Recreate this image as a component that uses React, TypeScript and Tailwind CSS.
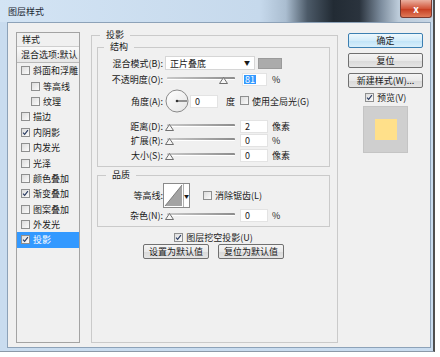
import React from "react";

type Item = { t: string; on?: boolean; ind?: boolean; sel?: boolean };

const items: Item[] = [
  { t: "斜面和浮雕" },
  { t: "等高线", ind: true },
  { t: "纹理", ind: true },
  { t: "描边" },
  { t: "内阴影", on: true },
  { t: "内发光" },
  { t: "光泽" },
  { t: "颜色叠加" },
  { t: "渐变叠加", on: true },
  { t: "图案叠加" },
  { t: "外发光" },
  { t: "投影", on: true, sel: true },
];

function Check({ on }: { on?: boolean }) {
  return (
    <span className="inline-flex h-[9px] w-[9px] shrink-0 items-center justify-center border border-[#8e8f8f] bg-[linear-gradient(135deg,#dcdcdc,#fbfbfb)]">
      {on && (
        <svg viewBox="0 0 9 9" className="h-[7px] w-[7px]">
          <path d="M1.3 4.6 L3.4 6.8 L7.6 1.4" stroke="#2b3d63" strokeWidth="1.5" fill="none" />
        </svg>
      )}
    </span>
  );
}

function Slider({ pos }: { pos: number }) {
  return (
    <div className="relative ml-[2px] h-[12px] w-[70px] shrink-0">
      <div className="absolute left-[2px] right-0 top-[4px] h-[3px] rounded-[1px] border-b border-b-white bg-[linear-gradient(90deg,#c8c8c8,#8c8c8c)]" />
      <svg className="absolute top-[4px]" style={{ left: pos }} width="9" height="7" viewBox="0 0 9 7">
        <path d="M4.5 0.5 L8.5 6.5 L0.5 6.5 Z" fill="#f6f6f6" stroke="#6f6f6f" />
      </svg>
    </div>
  );
}

function Field({ v, w = "w-[28px]", ml = "ml-[5px]" }: { v: string; w?: string; ml?: string }) {
  return (
    <div className={`${ml} ${w} flex h-[13px] shrink-0 items-center border border-[#e3e3e3] bg-white pl-[4px]`}>
      {v}
    </div>
  );
}

function Btn({ children, w, primary }: { children: React.ReactNode; w: string; primary?: boolean }) {
  return (
    <div
      className={`${w} flex h-[15px] items-center justify-center rounded-[2px] border ${
        primary
          ? "border-[#3c7fb1] bg-[linear-gradient(#eef8fd,#d3ecfa_50%,#bfe3f8_51%,#d9effb)]"
          : "border-[#707070] bg-[linear-gradient(#f4f4f4,#e9e9e9_50%,#d9d9d9_51%,#e5e5e5)]"
      }`}
    >
      {children}
    </div>
  );
}

function Label({ children }: { children: React.ReactNode }) {
  return <div className="w-[65px] shrink-0 text-right">{children}</div>;
}

export default function App() {
  return (
    <div className="h-[357px] w-[440px] bg-white font-['Noto_Sans_CJK_SC',sans-serif] text-[9px] leading-none text-[#1a1a1a]">
      <div className="h-[352px] w-[435px] border-r-2 border-b border-r-[#4f4f4f] border-b-[#8c99a8] bg-[#c9dcef]">
        {/* title bar */}
        <div className="relative flex h-[22px] items-center bg-[linear-gradient(90deg,#d3e4f4_0%,#c6d9ec_60%,#aabdd0_66%,#4c5a68_71%,#222b34_77%,#2a333d_83%,#7d8d9e_88%,#bccbd9_92%,#c7d6e5_100%)] pl-[8px]">
          <span className="text-[#1b2733]">图层样式</span>
          <div className="absolute right-[1px] top-0 flex h-[18px] w-[32px] items-center justify-center rounded-b-[3px] border border-t-0 border-[#7a3a30] bg-[linear-gradient(#eab0a0,#d2553a_50%,#c43a1e_51%,#e07a58)] text-[10px] font-bold text-white">
            x
          </div>
        </div>

        {/* client area */}
        <div className="ml-[7px] flex h-[326px] w-[424px] items-start border border-[#8da2b8] bg-[#f0f0f0] pl-[8px]">
          {/* style list */}
          <div className="mt-[9px] h-[311px] w-[64px] shrink-0 border border-[#a3a3a3] bg-[#f0f0f0]">
            <div className="flex h-[14px] items-center border-b border-[#cfcfcf] pl-[5px]">样式</div>
            <div className="flex h-[16px] items-center border-b border-[#b9b9b9] bg-[linear-gradient(#fafafa,#e6e6e6)] pl-[4px]">
              混合选项:默认
            </div>
            {items.map((it) => (
              <div
                key={it.t}
                className={`flex h-[15.4px] items-center gap-[3px] ${it.ind ? "pl-[14px]" : "pl-[4px]"} ${
                  it.sel ? "bg-[#3399ff] text-white" : ""
                }`}
              >
                <Check on={it.on} />
                <span>{it.t}</span>
              </div>
            ))}
          </div>

          {/* main settings */}
          <fieldset className="ml-[11px] mt-[6px] h-[314px] w-[247px] shrink-0 border border-[#cacaca] pl-[5px] pr-[7px]">
            <legend className="ml-[3px] px-[6px] leading-[12px]">投影</legend>

            <fieldset className="w-full border border-[#cacaca] pb-[4px]">
              <legend className="ml-[6px] px-[6px] leading-[12px]">结构</legend>

              <div className="mt-[3px] flex h-[14px] items-center">
                <Label>混合模式(B):</Label>
                <div className="ml-[2px] flex h-[14px] w-[90px] items-center justify-between border border-[#d6d6d6] bg-white pl-[4px] pr-[4px]">
                  <span>正片叠底</span>
                  <span className="text-[6px]">▼</span>
                </div>
                <div className="ml-[3px] h-[11px] w-[24px] border border-[#9a9a9a] bg-[#ababab]" />
              </div>

              <div className="mt-[2px] flex h-[14px] items-center">
                <Label>不透明度(O):</Label>
                <Slider pos={54} />
                <div className="ml-[7px] flex h-[13px] w-[25px] items-center border border-[#e3e3e3] bg-white pl-[1px]">
                  <span className="bg-[#3399ff] px-[1px] text-white">81</span>
                </div>
                <span className="ml-[5px]">%</span>
              </div>

              <div className="mt-[3px] flex h-[24px] items-center">
                <Label>角度(A):</Label>
                <svg className="ml-[2px] shrink-0" width="24" height="24" viewBox="0 0 24 24">
                  <defs>
                    <linearGradient id="dial" x1="0" y1="0" x2="1" y2="1">
                      <stop offset="0" stopColor="#ffffff" />
                      <stop offset="1" stopColor="#e4e4e4" />
                    </linearGradient>
                  </defs>
                  <circle cx="12" cy="12" r="11" fill="url(#dial)" stroke="#8a8a8a" />
                  <line x1="12" y1="12" x2="22" y2="12" stroke="#333" strokeWidth="1" />
                  <circle cx="12" cy="12" r="1.3" fill="#333" />
                </svg>
                <Field v="0" ml="ml-[1px]" />
                <span className="ml-[8px]">度</span>
                <span className="ml-[5px]">
                  <Check />
                </span>
                <span className="ml-[3px]">使用全局光(G)</span>
              </div>

              <div className="mt-[6px] flex h-[14px] items-center">
                <Label>距离(D):</Label>
                <Slider pos={0} />
                <Field v="2" />
                <span className="ml-[4px]">像素</span>
              </div>
              <div className="flex h-[14px] items-center">
                <Label>扩展(R):</Label>
                <Slider pos={0} />
                <Field v="0" />
                <span className="ml-[4px]">%</span>
              </div>
              <div className="mt-[1px] flex h-[14px] items-center">
                <Label>大小(S):</Label>
                <Slider pos={0} />
                <Field v="0" />
                <span className="ml-[4px]">像素</span>
              </div>
            </fieldset>

            <fieldset className="mt-[2px] w-full border border-[#cacaca] pb-[4px]">
              <legend className="ml-[8px] px-[6px] leading-[12px]">品质</legend>

              <div className="mt-[2px] flex h-[25px] items-center">
                <Label>等高线:</Label>
                <div className="flex h-[25px] w-[27px] shrink-0 border border-[#8a8a8a] bg-white">
                  <svg width="19" height="23" viewBox="0 0 19 23" className="shrink-0">
                    <path d="M1 22 L18 1 L18 22 Z" fill="#a3a3a3" />
                    <path d="M1 22 L18 1" stroke="#6a6a6a" strokeWidth="0.8" />
                  </svg>
                  <div className="flex flex-1 items-center justify-center border-l border-[#b0b0b0] text-[5px]">▼</div>
                </div>
                <span className="ml-[13px]">
                  <Check />
                </span>
                <span className="ml-[3px]">消除锯齿(L)</span>
              </div>
              <div className="flex h-[14px] items-center">
                <Label>杂色(N):</Label>
                <Slider pos={0} />
                <Field v="0" />
                <span className="ml-[4px]">%</span>
              </div>
            </fieldset>

            <div className="mt-[4px] flex h-[12px] items-center justify-center gap-[3px]">
              <Check on />
              <span>图层挖空投影(U)</span>
            </div>
            <div className="mt-[1px] flex justify-center gap-[9px]">
              <Btn w="w-[66px]">设置为默认值</Btn>
              <Btn w="w-[66px]">复位为默认值</Btn>
            </div>
          </fieldset>

          {/* right column */}
          <div className="ml-[10px] mt-[10px] flex w-[75px] shrink-0 flex-col">
            <Btn w="w-[75px]" primary>
              确定
            </Btn>
            <div className="mt-[5px]">
              <Btn w="w-[75px]">复位</Btn>
            </div>
            <div className="mt-[5px]">
              <Btn w="w-[75px]">新建样式(W)...</Btn>
            </div>
            <div className="mt-[3px] flex h-[12px] items-center gap-[3px] pl-[17px]">
              <Check on />
              <span>预览(V)</span>
            </div>
            <div className="ml-[15px] mt-[3px] flex h-[47px] w-[45px] items-center justify-center border border-[#c4c4c4] bg-[#cfcfcf]">
              <div className="h-[21px] w-[22px] bg-[#ffe08a]" />
            </div>
          </div>
        </div>
      </div>
    </div>
  );
}
